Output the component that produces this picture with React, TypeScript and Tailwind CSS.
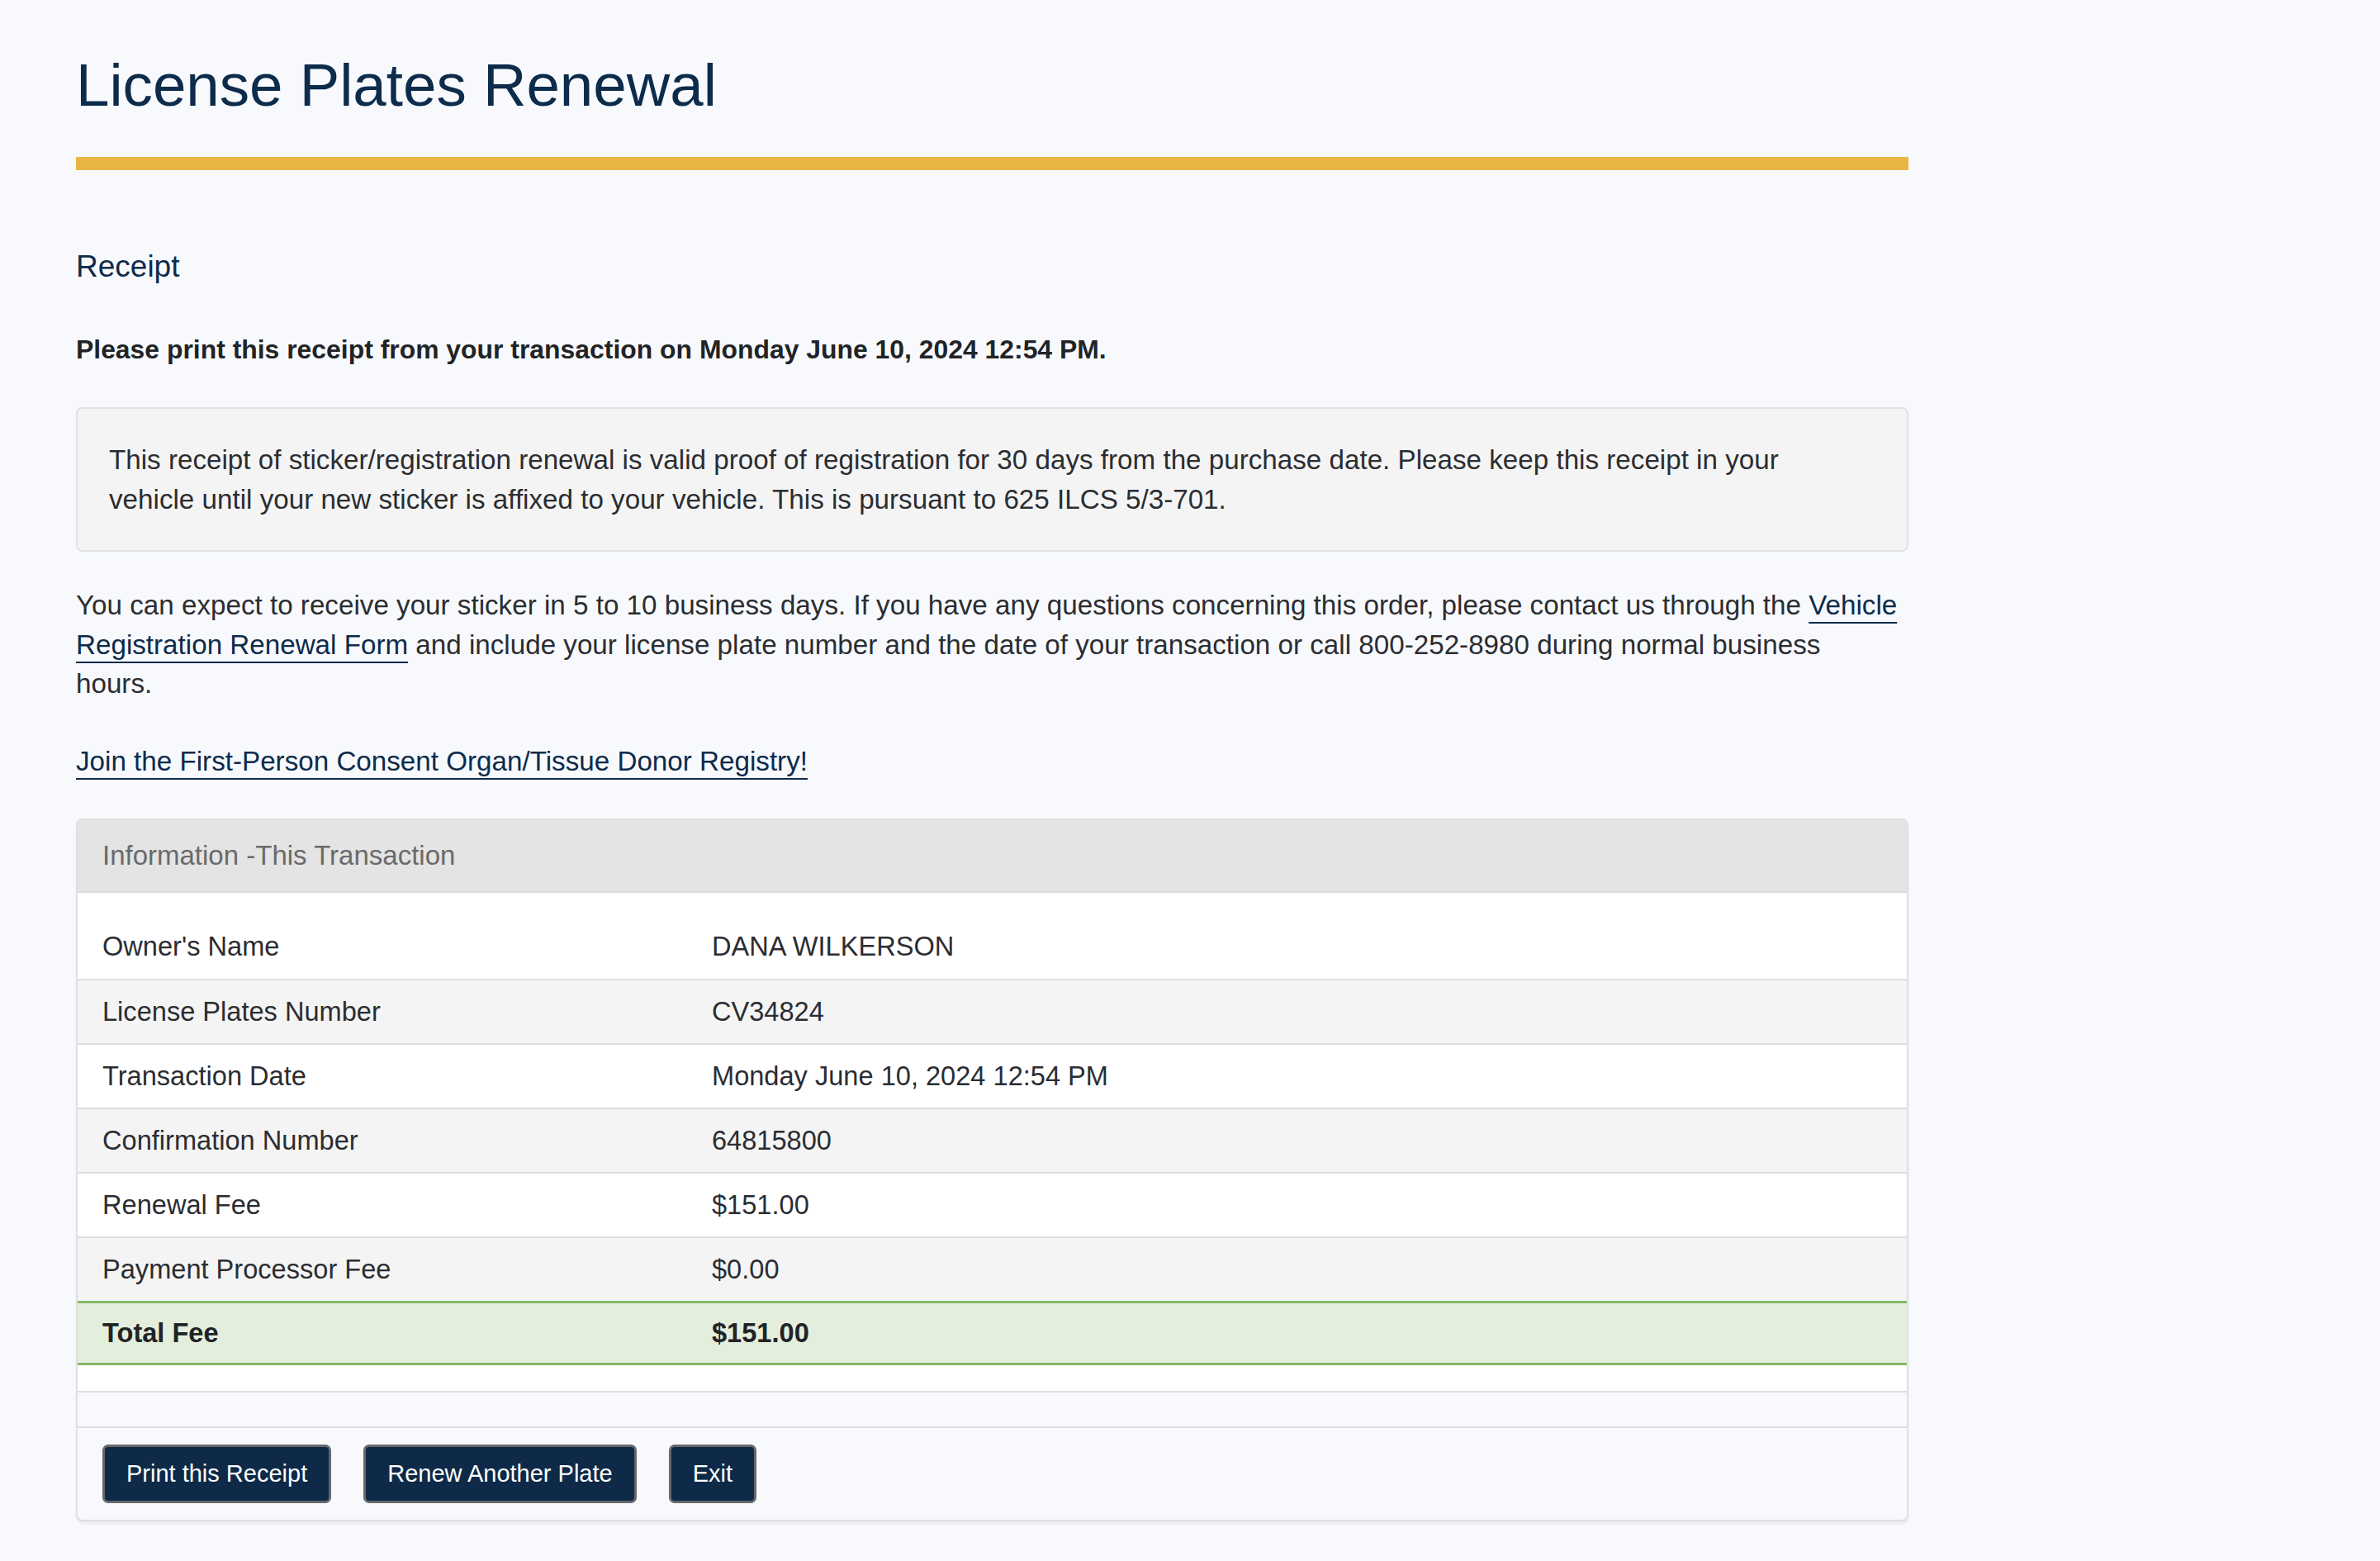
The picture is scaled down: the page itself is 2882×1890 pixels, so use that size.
import React from "react";

const rows = [
  { label: "Owner's Name", value: "DANA WILKERSON" },
  { label: "License Plates Number", value: "CV34824" },
  { label: "Transaction Date", value: "Monday June 10, 2024 12:54 PM" },
  { label: "Confirmation Number", value: "64815800" },
  { label: "Renewal Fee", value: "$151.00" },
  { label: "Payment Processor Fee", value: "$0.00" },
];

const btn =
  "h-[71px] rounded-[7px] border-[3px] border-[#66686b] bg-[#0e2a48] px-[26px] text-[29px] text-white";

export default function App() {
  return (
    <div className="min-h-screen bg-[#f7f9fc] px-[92px] pt-[60px] pb-[48px] font-['Liberation_Sans',Arial,sans-serif] text-[#2b2d31]">
      <div className="w-[2219px]">
        {/* Page title */}
        <h1 className="text-[72.7px] leading-[86px] font-normal text-[#0d2b4b]">
          License Plates Renewal
        </h1>
        <div className="mt-[44px] h-[16px] bg-[#e8b645]" />

        <h2 className="mt-[95px] text-[37px] leading-[44px] text-[#0d2b4b]">Receipt</h2>

        <p className="mt-[54px] text-[31.9px] leading-[48px] font-bold text-[#222326]">
          Please print this receipt from your transaction on Monday June 10, 2024 12:54 PM.
        </p>

        {/* Proof of registration note */}
        <div className="mt-[46px] rounded-[8px] border-2 border-[#e2e2e2] bg-[#f4f4f4] px-[38px] py-[38px] text-[33.2px] leading-[47.5px]">
          This receipt of sticker/registration renewal is valid proof of registration for 30 days from
          the purchase date. Please keep this receipt in your
          <br />
          vehicle until your new sticker is affixed to your vehicle. This is pursuant to 625 ILCS
          5/3-701.
        </div>

        <p className="mt-[41px] text-[33.2px] leading-[47.5px]">
          You can expect to receive your sticker in 5 to 10 business days. If you have any questions
          concerning this order, please contact us through the{" "}
          <a href="#" className="text-[#0d2b4b] underline decoration-2 underline-offset-[9px]">
            Vehicle
            <br />
            Registration Renewal Form
          </a>{" "}
          and include your license plate number and the date of your transaction or call 800-252-8980
          during normal business
          <br />
          hours.
        </p>

        <p className="mt-[46px] text-[33.2px] leading-[47.5px]">
          <a href="#" className="text-[#0d2b4b] underline decoration-2 underline-offset-[9px]">
            Join the First-Person Consent Organ/Tissue Donor Registry!
          </a>
        </p>

        {/* Transaction card */}
        <div className="mt-[46px] overflow-hidden rounded-[8px] border-2 border-[#e0e0e0] bg-[#f7f9fc] shadow-[0_3px_3px_rgba(0,0,0,0.06)]">
          <div className="h-[88px] border-b-2 border-[#dcdcdc] bg-[#e4e4e4] px-[30px] pt-[19px] text-[33px] leading-[47.5px] text-[#6a6a6a]">
            Information -This Transaction
          </div>

          <div className="bg-white pt-[26px] pb-[31px] text-[32.6px] leading-[47.5px]">
            {rows.map((r, i) => (
              <div
                key={r.label}
                className={
                  "flex h-[78px] items-center " +
                  (i > 0 ? "border-t-2 border-[#dddddd] " : "") +
                  (i % 2 === 1 ? "bg-[#f4f4f4]" : "bg-white")
                }
              >
                <div className="w-[768px] shrink-0 pl-[30px]">{r.label}</div>
                <div>{r.value}</div>
              </div>
            ))}
            <div className="flex h-[78px] items-center border-y-[3px] border-[#87b86b] bg-[#e3efdc] font-bold text-[#222326]">
              <div className="w-[768px] shrink-0 pl-[30px]">Total Fee</div>
              <div>$151.00</div>
            </div>
          </div>

          <div className="h-[43px] border-t-2 border-[#dddddd]" />

          <div className="flex gap-[39px] border-t-2 border-[#dddddd] px-[30px] py-[20px]">
            <button className={btn}>Print this Receipt</button>
            <button className={btn}>Renew Another Plate</button>
            <button className={btn}>Exit</button>
          </div>
        </div>
      </div>
    </div>
  );
}
